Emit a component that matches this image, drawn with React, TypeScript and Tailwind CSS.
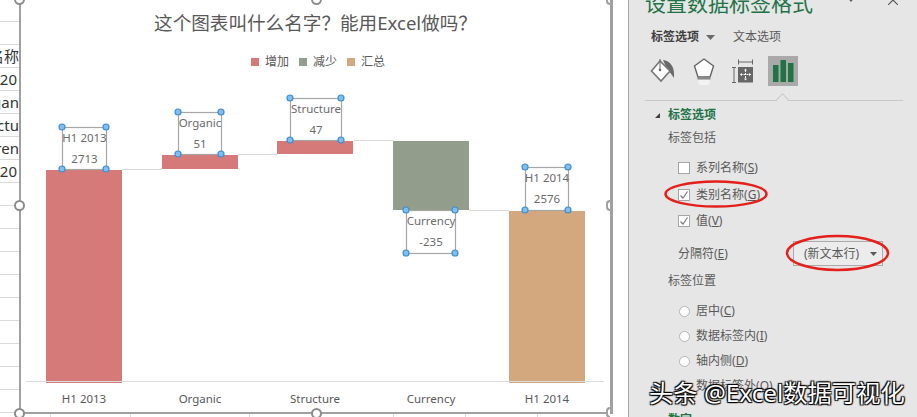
import React from "react";

const CJK = "font-['Noto_Sans','Noto_Sans_CJK_SC',sans-serif]";

const BARS = [
  { name: "H1 2013", value: "2713", x: 46, y: 170, h: 213, fill: "#d57a78" },
  { name: "Organic", value: "51", x: 162, y: 155, h: 14, fill: "#d57a78" },
  { name: "Structure", value: "47", x: 277, y: 141, h: 13, fill: "#d57a78" },
  { name: "Currency", value: "-235", x: 393, y: 141, h: 69, fill: "#939d8b" },
  { name: "H1 2014", value: "2576", x: 509, y: 211, h: 172, fill: "#d3a87e" },
];

const LABELS = [
  { x: 62, y: 127, w: 44, h: 42 },
  { x: 178, y: 112, w: 43, h: 42 },
  { x: 290, y: 98, w: 51, h: 42 },
  { x: 406, y: 210, w: 49, h: 43 },
  { x: 525, y: 167, w: 43, h: 43 },
];

const CONNECTORS = [
  { x1: 122, x2: 162, y: 169 },
  { x1: 238, x2: 277, y: 154 },
  { x1: 354, x2: 393, y: 140 },
  { x1: 469, x2: 509, y: 210 },
];

const LEGEND = [
  { text: "增加", color: "bg-[#d57a78]" },
  { text: "减少", color: "bg-[#939d8b]" },
  { text: "汇总", color: "bg-[#d3a87e]" },
];

const SHEET_ROWS = [
  { text: "" },
  { text: "" },
  { text: "名称", pad: "" },
  { text: "20", pad: "pr-[2px]" },
  { text: "gan", pad: "" },
  { text: "uctu", pad: "" },
  { text: "ren", pad: "" },
  { text: "20", pad: "pr-[2px]" },
  ...Array.from({ length: 11 }, () => ({ text: "" })),
];

function Sheet() {
  return (
    <div className="w-[19px] shrink-0 overflow-hidden bg-white">
      {SHEET_ROWS.map((row, i) => (
        <div
          key={i}
          className={`${i === 0 ? "h-[22px]" : "h-[23px]"} flex items-center justify-end border-b border-[#d9d9d9] text-[15px] leading-none text-[#333] whitespace-nowrap ${row.pad ?? ""} ${CJK}`}
        >
          {row.text}
        </div>
      ))}
    </div>
  );
}

function Handle({ cx, cy }: { cx: number; cy: number }) {
  return <circle cx={cx} cy={cy} r="3" fill="#80bdf0" stroke="#3f8fd0" strokeWidth="1.2" />;
}

function Plot() {
  return (
    <svg className="absolute -left-[2px] top-0 h-[417px] w-[594px]" viewBox="19 0 594 417" fontFamily="'Noto Sans', sans-serif">
      {CONNECTORS.map((c) => (
        <line key={c.x1} x1={c.x1} x2={c.x2} y1={c.y + 0.5} y2={c.y + 0.5} stroke="#d9d9d9" />
      ))}
      {BARS.map((b) => (
        <rect key={b.name} x={b.x} y={b.y} width={76} height={b.h} fill={b.fill} />
      ))}
      <line x1="26" x2="604" y1="381.5" y2="381.5" stroke="#dcdcdc" />
      {BARS.map((b) => (
        <text key={b.name} x={b.x + 38} y="403" textAnchor="middle" fontSize="11.5" fill="#595959">
          {b.name}
        </text>
      ))}
      {LABELS.map((l, i) => (
        <g key={i}>
          <rect x={l.x + 0.5} y={l.y + 0.5} width={l.w} height={l.h} fill={i === 3 ? "#fff" : "none"} stroke="#a6a6a6" strokeWidth="1.2" />
          <text x={l.x + l.w / 2 + 0.5} y={l.y + 15} textAnchor="middle" fontSize="11.5" fill="#6b6b6b">
            {BARS[i].name}
          </text>
          <text x={l.x + l.w / 2 + 0.5} y={l.y + 36} textAnchor="middle" fontSize="11.5" fill="#6b6b6b">
            {BARS[i].value}
          </text>
          <Handle cx={l.x} cy={l.y} />
          <Handle cx={l.x + l.w} cy={l.y} />
          <Handle cx={l.x} cy={l.y + l.h} />
          <Handle cx={l.x + l.w} cy={l.y + l.h} />
        </g>
      ))}
    </svg>
  );
}

function FrameHandle({ className }: { className: string }) {
  return <div className={`absolute h-[11px] w-[11px] rounded-full border-2 border-[#8c8c8c] bg-white ${className}`} />;
}

function EdgeHandle({ className }: { className: string }) {
  return <div className={`absolute right-0 h-[11px] w-[4px] rounded-l-full border-2 border-r-0 border-[#a0a0a0] bg-white ${className}`} />;
}

function Chart() {
  return (
    <div className="w-[594px] shrink-0">
      <div className={`relative h-[414px] border-b-2 border-l-2 border-r-[3px] border-[#a0a0a0] bg-white ${CJK}`}>
        <div className="pt-[11px] text-center text-[18.6px] leading-[24px] text-[#595959]">这个图表叫什么名字？能用Excel做吗？</div>
        <div className="mt-[18px] flex justify-center gap-[10px] pl-[5px] text-[12px] leading-[18px] text-[#595959]">
          {LEGEND.map((item) => (
            <div key={item.text} className="flex items-center gap-[6px]">
              <span className={`h-[8px] w-[8px] ${item.color}`} />
              <span>{item.text}</span>
            </div>
          ))}
        </div>
        <Plot />
        <FrameHandle className="-left-[7px] -top-[6px]" />
        <FrameHandle className="-left-[7px] top-[200px]" />
        <FrameHandle className="-left-[7px] -bottom-[7px]" />
        <FrameHandle className="left-[290px] -top-[6px]" />
        <FrameHandle className="left-[290px] -bottom-[7px]" />
        <EdgeHandle className="-top-[6px]" />
        <EdgeHandle className="top-[200px]" />
        <EdgeHandle className="-bottom-[6px]" />
      </div>
      <div className="flex h-[3px]">
        <div className="w-[32px] border-r border-[#d9d9d9]" />
        <div className="w-[80px] border-r border-[#d9d9d9]" />
        <div className="w-[119px] border-r border-[#d9d9d9]" />
        <div className="w-[144px] border-r border-[#d9d9d9]" />
        <div className="w-[72px] border-r border-[#d9d9d9]" />
        <div className="w-[72px] border-r border-[#d9d9d9]" />
      </div>
    </div>
  );
}

function PaintIcon() {
  return (
    <svg width="26" height="26" viewBox="0 0 26 26">
      <path d="M13 2 C20 3 25 8 24 20 C22 17 21 15 18 13 Z" fill="#6a6a6a" />
      <path d="M10 3 L1.5 13 L11 23 L20 13 Z" fill="#fff" stroke="#777" strokeWidth="1.6" />
      <path d="M10 1 V11" stroke="#666" strokeWidth="1" fill="none" />
      <circle cx="10" cy="12" r="1.3" fill="#666" />
    </svg>
  );
}

function PentagonIcon() {
  return (
    <svg width="22" height="28" viewBox="0 0 22 28">
      <path d="M11 2 L20.5 9 L17 20 H5 L1.5 9 Z" fill="#fff" stroke="#666" strokeWidth="1.4" />
      <path d="M5 23 H17 L16 28 H6 Z" fill="#f2f2f2" />
      <path d="M4.5 21.5 H17.5" stroke="#8a8a8a" strokeWidth="2" />
    </svg>
  );
}

function SizeIcon() {
  return (
    <svg width="24" height="24" viewBox="0 0 24 24">
      <path d="M0 8.5 H4 M0 23.5 H4 M2 8.5 V23.5 M6 3 H21 M6.5 0.5 V5.5 M20.5 0.5 V5.5" stroke="#666" strokeWidth="1" fill="none" />
      <rect x="6" y="8" width="15" height="15.5" fill="#666" />
      <path d="M13.5 11 V21 M8.5 15.5 H18.5" stroke="#fff" strokeWidth="1" strokeDasharray="2 1" />
      <path d="M13.5 9.5 L12 11.5 H15 Z M13.5 21.5 L12 19.5 H15 Z M8 15.5 L10 14 V17 Z M19 15.5 L17 14 V17 Z" fill="#fff" />
    </svg>
  );
}

function BarsIcon() {
  return (
    <svg width="21" height="22" viewBox="0 0 21 22">
      <rect x="0" y="5" width="5.5" height="17" fill="#217346" />
      <rect x="7.5" y="0" width="5.5" height="22" fill="#217346" />
      <rect x="15" y="3" width="5.5" height="19" fill="#217346" />
    </svg>
  );
}

function CheckRow({ label, hotkey, checked }: { label: string; hotkey: string; checked?: boolean }) {
  return (
    <div className="flex h-[26.5px] items-center gap-[6px] pl-[49px]">
      <span className="flex h-[12px] w-[12px] items-center justify-center border border-[#a6a6a6] bg-white">
        {checked && (
          <svg width="10" height="10" viewBox="0 0 10 10">
            <path d="M1.5 5.5 L4 8 L8.5 1.5" fill="none" stroke="#7a7a7a" strokeWidth="1.2" />
          </svg>
        )}
      </span>
      <span>{label}(<u>{hotkey}</u>)</span>
    </div>
  );
}

function RadioRow({ label, hotkey }: { label: string; hotkey: string }) {
  return (
    <div className="flex h-[25px] items-center gap-[6px] pl-[50px]">
      <span className="h-[11px] w-[11px] rounded-full border border-[#b5b5b5] bg-white" />
      <span>{label}(<u>{hotkey}</u>)</span>
    </div>
  );
}

function Panel() {
  return (
    <div className={`relative ml-[15px] h-[417px] w-[289px] shrink-0 overflow-hidden border-l border-[#a6a6a6] bg-[#e6e6e6] text-[12px] leading-[18px] text-[#595959] ${CJK}`}>
      <div className="-mt-[10px] flex items-center justify-between pl-[16px] pr-[19px]">
        <div className="text-[21px] leading-[26px] text-[#217346]">设置数据标签格式</div>
        <div className="flex items-center gap-[33px]">
          <svg width="8" height="5" viewBox="0 0 8 5" className="-mt-[8px]"><path d="M0 0 H8 L4 5 Z" fill="#595959" /></svg>
          <svg width="10" height="10" viewBox="0 0 10 10" className="-mt-[6px]"><path d="M0 0 L10 10 M10 0 L0 10" stroke="#595959" strokeWidth="1.2" /></svg>
        </div>
      </div>
      <div className="mt-[12px] flex items-center pl-[22px]">
        <span className="font-bold text-[#404040]">标签选项</span>
        <svg width="9" height="5" viewBox="0 0 9 5" className="ml-[7px]"><path d="M0 0 H9 L4.5 5 Z" fill="#6a6a6a" /></svg>
        <span className="ml-[18px]">文本选项</span>
      </div>
      <div className="mt-[10px] flex h-[30px] items-center pl-[21px]">
        <div className="w-[43px]"><PaintIcon /></div>
        <div className="w-[39px]"><PentagonIcon /></div>
        <div className="w-[36px]"><SizeIcon /></div>
        <div className="flex h-[30px] w-[30px] items-center justify-center bg-[#a9a9a9]"><BarsIcon /></div>
      </div>
      <div className="relative ml-[16px] mr-[14px] mt-[14px] border-b border-[#c8c8c8]">
        <div className="absolute left-[133px] -top-[5px] h-[9px] w-[9px] rotate-45 border-l border-t border-[#c8c8c8] bg-[#e6e6e6]" />
      </div>
      <div className="mt-[5px] flex h-[18px] items-center pl-[26px]">
        <svg width="5" height="5" viewBox="0 0 5 5" className="mr-[8px]"><path d="M5 0 V5 H0 Z" fill="#404040" /></svg>
        <span className="font-bold text-[#217346]">标签选项</span>
      </div>
      <div className="mt-[5px] pl-[39px]">标签包括</div>
      <div className="mt-[8px]">
        <CheckRow label="系列名称" hotkey="S" />
        <CheckRow label="类别名称" hotkey="G" checked />
        <CheckRow label="值" hotkey="V" checked />
      </div>
      <div className="mt-[6px] flex h-[26px] items-center justify-between pl-[49px] pr-[34px]">
        <span>分隔符(<u>E</u>)</span>
        <div className="flex h-[25px] w-[90px] items-center justify-between border border-[#ababab] bg-[#ececec] pl-[10px] pr-[5px]">
          <span>(新文本行)</span>
          <svg width="7" height="4" viewBox="0 0 7 4"><path d="M0 0 H7 L3.5 4 Z" fill="#595959" /></svg>
        </div>
      </div>
      <div className="mt-[5px] pl-[39px]">标签位置</div>
      <div className="mt-[9px]">
        <RadioRow label="居中" hotkey="C" />
        <RadioRow label="数据标签内" hotkey="I" />
        <RadioRow label="轴内侧" hotkey="D" />
        <RadioRow label="数据标签外" hotkey="O" />
      </div>
      <div className="mt-[12px] flex h-[18px] items-center pl-[26px]">
        <svg width="5" height="5" viewBox="0 0 5 5" className="mr-[8px]"><path d="M5 0 V5 H0 Z" fill="#404040" /></svg>
        <span className="font-bold text-[#217346]">数字</span>
      </div>
      <svg className="absolute left-[35px] top-[180px] h-[28px] w-[104px]" viewBox="0 0 104 28">
        <ellipse cx="52" cy="14" rx="50.5" ry="12.5" fill="none" stroke="#e4201c" strokeWidth="2.5" />
      </svg>
      <svg className="absolute left-[156px] top-[234px] h-[38px] w-[105px]" viewBox="0 0 105 38">
        <ellipse cx="52.5" cy="19" rx="50.5" ry="17" fill="none" stroke="#e4201c" strokeWidth="2.5" />
      </svg>
    </div>
  );
}

export default function App() {
  return (
    <div className="relative flex h-[417px] w-[917px] overflow-hidden bg-white">
      <Sheet />
      <Chart />
      <Panel />
      <div
        className={`absolute left-[649px] top-[378px] whitespace-nowrap text-[24.3px] leading-[30px] text-white [text-shadow:1px_1px_1px_#000,-1px_1px_1px_#000,1px_-1px_1px_#000,-1px_-1px_1px_#000] ${CJK}`}
      >
        头条 @Excel数据可视化
      </div>
    </div>
  );
}
